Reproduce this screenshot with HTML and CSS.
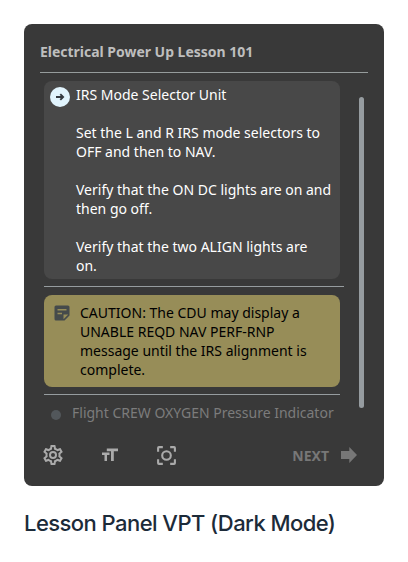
FILE: index.html
```html
<!DOCTYPE html>
<html lang="en">
<head>
<meta charset="utf-8">
<title>Lesson Panel</title>
<link rel="stylesheet" href="styles.css">
</head>
<body>
<main class="panel">
  <h1 class="title">Electrical Power Up Lesson 101</h1>
  <div class="content">
    <div class="steps">
      <section class="step">
        <svg class="step-icon" viewBox="0 0 20 20"><circle cx="10" cy="10" r="10" fill="#e1f4fd"/><path d="M6 10h7M10.3 7.200l2.800 2.800-2.800 2.800" fill="none" stroke="#343a40" stroke-width="1.900"/></svg>
        <div class="copy">
          <p>IRS Mode Selector Unit</p>
          <p>Set the L and R IRS mode selectors to<br>OFF and then to NAV.</p>
          <p>Verify that the ON DC lights are on and<br>then go off.</p>
          <p>Verify that the two ALIGN lights are<br>on.</p>
        </div>
      </section>
      <div class="rule rule-wide"></div>
      <section class="caution">
        <svg class="note-icon" viewBox="0 0 16 16"><path fill="#454a4b" fill-rule="evenodd" d="M2 .5h12q1.500 0 1.500 1.500v8.500l-5 5H2Q.5 15.500.5 14V2Q.5.5 2 .5zM3.500 4v1.500h9V4zM3.500 7.800v1.500h4.500V7.800zM9.500 14.200l4.700-4.700H9.500z"/></svg>
        <p>CAUTION: The CDU may display a<br>UNABLE REQD NAV PERF-RNP<br>message until the IRS alignment is<br>complete.</p>
      </section>
      <div class="rule"></div>
      <div class="upcoming"><span class="dot"></span><span>Flight CREW OXYGEN Pressure Indicator</span></div>
    </div>
    <div class="scrollbar"></div>
  </div>
  <footer class="toolbar">
    <svg class="gear" viewBox="0 0 24 24"><path d="M19.430 12.980c.04-.32.07-.64.07-.98s-.03-.66-.07-.98l2.110-1.650c.19-.15.24-.42.12-.64l-2-3.460c-.12-.22-.39-.3-.61-.22l-2.490 1c-.52-.4-1.080-.73-1.690-.98l-.38-2.650A.488.488 0 0 0 14 2h-4c-.25 0-.46.18-.49.42l-.38 2.650c-.61.25-1.170.59-1.690.98l-2.490-1c-.23-.09-.49 0-.61.22l-2 3.460c-.13.22-.07.49.12.64l2.110 1.650c-.04.32-.07.65-.07.98s.03.66.07.98l-2.110 1.650c-.19.15-.24.42-.12.64l2 3.460c.12.22.39.3.61.22l2.490-1c.52.4 1.080.73 1.690.98l.38 2.650c.03.24.24.42.49.42h4c.25 0 .46-.18.49-.42l.38-2.650c.61-.25 1.170-.59 1.690-.98l2.490 1c.23.09.49 0 .61-.22l2-3.460c.12-.22.07-.49-.12-.64zm-1.980-1.710c.04.31.05.52.05.73s-.02.43-.05.73l-.14 1.130.89.7 1.080.84-.7 1.210-1.270-.51-1.040-.42-.9.68c-.43.32-.84.56-1.250.73l-1.060.43-.16 1.130-.2 1.350h-1.400l-.35-2.480-1.060-.43c-.43-.18-.83-.41-1.230-.71l-.91-.7-1.060.43-1.270.51-.7-1.210 1.080-.84.89-.7-.14-1.130c-.03-.31-.05-.54-.05-.74s.02-.43.05-.73l.14-1.130-.89-.7-1.080-.84.7-1.210 1.270.51 1.040.42.9-.68c.43-.32.84-.56 1.250-.73l1.060-.43.16-1.130.2-1.350h1.390l.35 2.480 1.060.43c.43.18.83.41 1.230.71l.91.7 1.060-.43 1.270-.51.7 1.210-1.070.85-.89.7zM12 8a4 4 0 1 0 0 8 4 4 0 0 0 0-8m0 6a2 2 0 1 1 0-4 2 2 0 0 1 0 4"/></svg>
    <svg class="text-size" viewBox="0 0 16 14"><path d="M4.800.5H16v2.800h-4.200V13H9V3.300H4.800zM0 4.500h7.500V7H5v6H2.500V7H0z"/></svg>
    <svg class="focus" viewBox="0 0 20 20"><g fill="none" stroke="currentColor" stroke-width="2"><circle cx="10" cy="10" r="4.100"/><path d="M2 6.500V2.800Q2 2 2.800 2H6.500M13.500 2h3.700q.8 0 .8.800V6.500M18 13.500v3.700q0 .8-.8.800H13.500M6.500 18H2.800Q2 18 2 17.200V13.500"/></g></svg>
    <span class="next">NEXT</span>
    <svg class="next-arrow" viewBox="0 0 16 16"><path d="M0 4.100h8.300V0L16 8l-7.700 8v-4.100H0z"/></svg>
  </footer>
</main>
<h2 class="caption">Lesson Panel VPT (Dark Mode)</h2>
</body>
</html>
```
FILE: styles.css
```css
* { box-sizing: border-box; }
body { margin: 0; padding: 24px; background: #fff; }
h1, h2, p { margin: 0; }
svg { display: block; flex: none; }
.panel {
  width: 360px;
  height: 462px;
  padding: 0 16px;
  background: #393939;
  border-radius: 8px;
  font: 14px/19px "Noto Sans", sans-serif;
  white-space: nowrap;
}
.title {
  height: 49px;
  padding-top: 18px;
  border-bottom: 1px solid #969c9c;
  color: #bebebe;
  font-size: 14px;
  font-weight: 700;
  letter-spacing: -0.02px;
  line-height: 19px;
}
.content { display: flex; padding: 8px 4px 0; height: 367px; }
.steps { width: 296px; }
.step {
  display: flex;
  gap: 6px;
  height: 198px;
  padding: 4px 6px;
  background: #484848;
  border-radius: 8px;
  color: #fff;
}
.step-icon { width: 20px; height: 20px; margin-top: 2px; }
.copy { display: grid; gap: 19px; align-content: start; }
.rule { height: 1px; margin: 7px 0; background: #969c9f; }
.rule-wide { width: 300px; margin-bottom: 8px; }
.caution {
  display: flex;
  gap: 10px;
  height: 92px;
  padding: 8px 10px;
  background: #978d58;
  border-radius: 8px;
  color: #000;
}
.note-icon { width: 16px; height: 16px; margin-top: 2px; }
.upcoming { display: flex; align-items: center; gap: 11px; padding: 1px 0 0 7px; color: #7c7c7c; }
.dot { width: 10px; height: 10px; margin-top: 4px; border-radius: 50%; background: #52575b; }
.scrollbar { width: 5px; height: 311px; margin: 16px 0 0 19px; border-radius: 3px; background: #969ca0; }
.toolbar { display: flex; align-items: center; height: 30px; color: #aaa; }
.toolbar svg { fill: currentColor; }
.gear { width: 24px; height: 24px; margin-left: 0.5px; }
.text-size { width: 16px; height: 14px; margin-left: 37.5px; }
.focus { width: 21px; height: 21px; margin-left: 38px; }
.next { margin-left: auto; color: #777; font-weight: 700; }
.next-arrow { width: 16px; height: 16px; margin: 0 11px 0 12px; color: #777; }
.caption {
  margin-top: 23px;
  color: #1c2b39;
  font: 500 22px/28px Inter, sans-serif;
  letter-spacing: -0.55px;
  white-space: nowrap;
}
```
